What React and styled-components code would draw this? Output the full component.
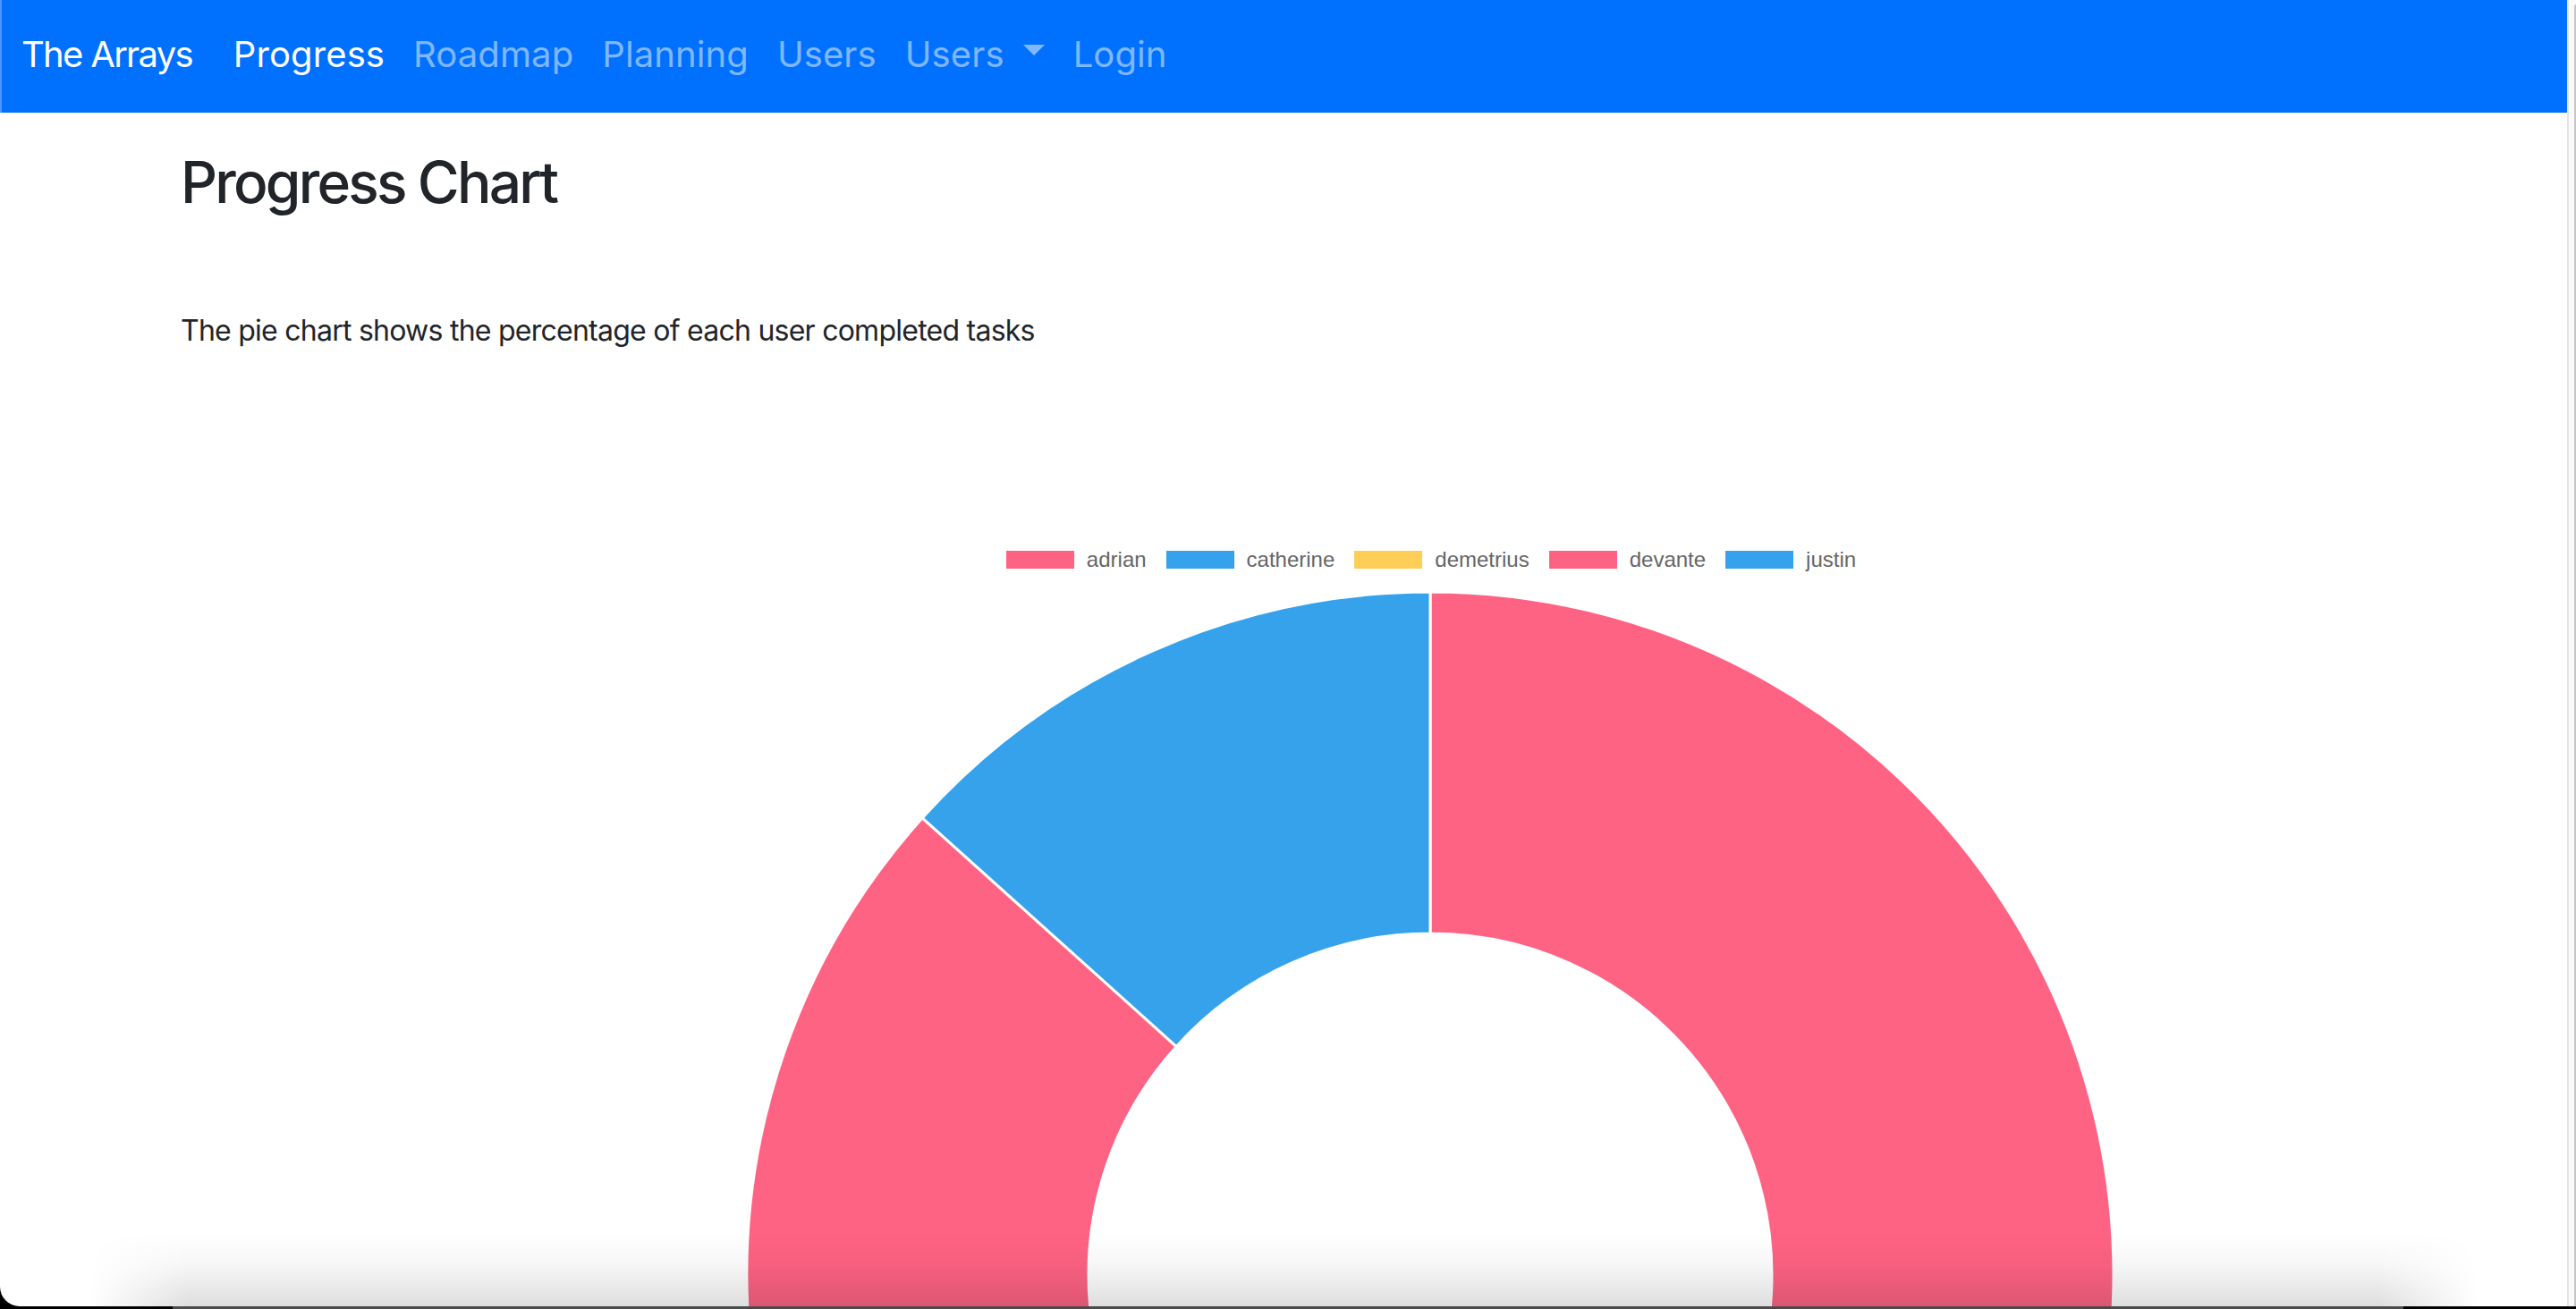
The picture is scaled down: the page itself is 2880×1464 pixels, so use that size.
import React from "react";
import styled, { createGlobalStyle } from "styled-components";

const GlobalStyle = createGlobalStyle`
  html, body {
    margin: 0;
    padding: 0;
    overflow: hidden;
    background: #000;
  }
  #root { width: 2880px; height: 1464px; }
  * { box-sizing: border-box; }
`;

const Screen = styled.div`
  width: 2880px;
  height: 1464px;
  display: flex;
  flex-direction: column;
  background: #000;
`;

const Window = styled.div`
  position: relative;
  display: flex;
  flex-direction: row;
  flex-shrink: 0;
  height: 1461px;
  background: #fff;
  border-bottom-left-radius: 22px;
  overflow: hidden;
`;

const Page = styled.div`
  flex: 1;
  display: flex;
  flex-direction: column;
  min-width: 0;
  font-family: Inter, "Noto Sans", sans-serif;
  color: #212529;
  & > * { flex-shrink: 0; }
`;

const ScrollEdge = styled.div`
  position: relative;
  width: 10px;
  flex-shrink: 0;
  background: #fafafa;
  border-left: 2px solid #e4e4e4;
  &::after {
    content: "";
    position: absolute;
    right: 0;
    top: 5px;
    bottom: 0;
    width: 2px;
    border-top-left-radius: 2px;
    background: #c6c6c6;
  }
`;

const Navbar = styled.nav`
  display: flex;
  align-items: center;
  height: 126px;
  padding: 0 22px 4px;
  background: #0070ff;
  border-left: 2px solid #4d96ff;
`;

const Brand = styled.a`
  font-size: 40px;
  line-height: 60px;
  letter-spacing: -1.7px;
  color: #fff;
  margin-right: 30px;
  text-decoration: none;
  white-space: nowrap;
`;

const NavLink = styled.a`
  display: flex;
  align-items: center;
  padding: 0 16px;
  font-size: 40px;
  line-height: 60px;
  letter-spacing: 0.1px;
  color: ${(p) => (p.$active ? "#fff" : "rgba(255,255,255,0.5)")};
  text-decoration: none;
  white-space: nowrap;
`;

const Caret = styled.span`
  display: inline-block;
  margin-left: 21px;
  margin-top: -10px;
  width: 0;
  height: 0;
  border-top: 12px solid rgba(255, 255, 255, 0.5);
  border-left: 12px solid transparent;
  border-right: 12px solid transparent;
`;

const Content = styled.div`
  padding-left: 202px;
`;

const Heading = styled.h2`
  margin: 40px 0 0;
  font-size: 64px;
  font-weight: 500;
  line-height: 1.2;
  letter-spacing: -2.8px;
  color: #212529;
`;

const Lead = styled.p`
  margin: 103px 0 0;
  font-size: 32px;
  line-height: 48px;
  letter-spacing: -0.75px;
  color: #212529;
`;

const ChartArea = styled.div`
  margin: 220px 0 0 328px;
  display: flex;
  flex-direction: column;
  align-items: center;
`;

const Legend = styled.div`
  display: flex;
  align-items: center;
  gap: 20px;
  height: 24px;
`;

const LegendItem = styled.div`
  display: flex;
  align-items: center;
  gap: 12px;
  font-family: "Liberation Sans", Arial, sans-serif;
  font-size: 24px;
  line-height: 24px;
  color: #666;
`;

const Swatch = styled.span`
  display: block;
  width: 80px;
  height: 24px;
  border: 2px solid #fff;
  background: ${(p) => p.$color};
`;

const ChartSvg = styled.svg`
  display: block;
  margin-top: 18px;
  flex-shrink: 0;
`;

const DockShadow = styled.div`
  position: absolute;
  left: 100px;
  right: 110px;
  bottom: 0;
  height: 82px;
  pointer-events: none;
  background: linear-gradient(to bottom, rgba(0, 0, 0, 0), rgba(0, 0, 0, 0.035) 45%, rgba(0, 0, 0, 0.13));
  -webkit-mask-image: linear-gradient(to right, transparent, #000 110px, #000 calc(100% - 110px), transparent);
  mask-image: linear-gradient(to right, transparent, #000 110px, #000 calc(100% - 110px), transparent);
`;

const DockEdge = styled.div`
  height: 3px;
  flex-shrink: 0;
  padding: 0 193px;
  display: flex;
`;

const DockBar = styled.div`
  flex: 1;
  background: #4a4a4a;
`;

const data = [
  { label: "adrian", value: 5, color: "#ff6384" },
  { label: "catherine", value: 4, color: "#36a2eb" },
  { label: "demetrius", value: 0, color: "#ffce56" },
  { label: "devante", value: 4, color: "#ff6384" },
  { label: "justin", value: 2, color: "#36a2eb" },
];

const SIZE = 1540;
const C = SIZE / 2;
const R = 764;
const r = 382;

function pt(rad, angle) {
  const a = ((angle - 90) * Math.PI) / 180;
  return [C + rad * Math.cos(a), C + rad * Math.sin(a)];
}

function arcPath(a0, a1) {
  const large = a1 - a0 > 180 ? 1 : 0;
  const [x0, y0] = pt(R, a0);
  const [x1, y1] = pt(R, a1);
  const [x2, y2] = pt(r, a1);
  const [x3, y3] = pt(r, a0);
  return `M${x0} ${y0} A${R} ${R} 0 ${large} 1 ${x1} ${y1} L${x2} ${y2} A${r} ${r} 0 ${large} 0 ${x3} ${y3} Z`;
}

function Doughnut() {
  const total = data.reduce((s, d) => s + d.value, 0);
  let acc = 0;
  const segs = data.map((d) => {
    const a0 = (acc / total) * 360;
    acc += d.value;
    const a1 = (acc / total) * 360;
    return { ...d, a0, a1 };
  });
  return (
    <ChartSvg width={SIZE} height={SIZE} viewBox={`0 0 ${SIZE} ${SIZE}`}>
      {segs
        .filter((s) => s.value > 0)
        .map((s) => (
          <path key={s.label} d={arcPath(s.a0, s.a1)} fill={s.color} stroke="#fff" strokeWidth="3" />
        ))}
    </ChartSvg>
  );
}

export default function App() {
  return (
    <>
      <GlobalStyle />
      <Screen>
        <Window>
          <Page>
            <Navbar>
              <Brand href="#">The Arrays</Brand>
              <NavLink $active href="#">Progress</NavLink>
              <NavLink href="#">Roadmap</NavLink>
              <NavLink href="#">Planning</NavLink>
              <NavLink href="#">Users</NavLink>
              <NavLink href="#">
                Users
                <Caret />
              </NavLink>
              <NavLink href="#">Login</NavLink>
            </Navbar>
            <Content>
              <Heading>Progress Chart</Heading>
              <Lead>The pie chart shows the percentage of each user completed tasks</Lead>
            </Content>
            <ChartArea>
              <Legend>
                {data.map((d) => (
                  <LegendItem key={d.label}>
                    <Swatch $color={d.color} />
                    {d.label}
                  </LegendItem>
                ))}
              </Legend>
              <Doughnut />
            </ChartArea>
          </Page>
          <ScrollEdge />
          <DockShadow />
        </Window>
        <DockEdge>
          <DockBar />
        </DockEdge>
      </Screen>
    </>
  );
}
